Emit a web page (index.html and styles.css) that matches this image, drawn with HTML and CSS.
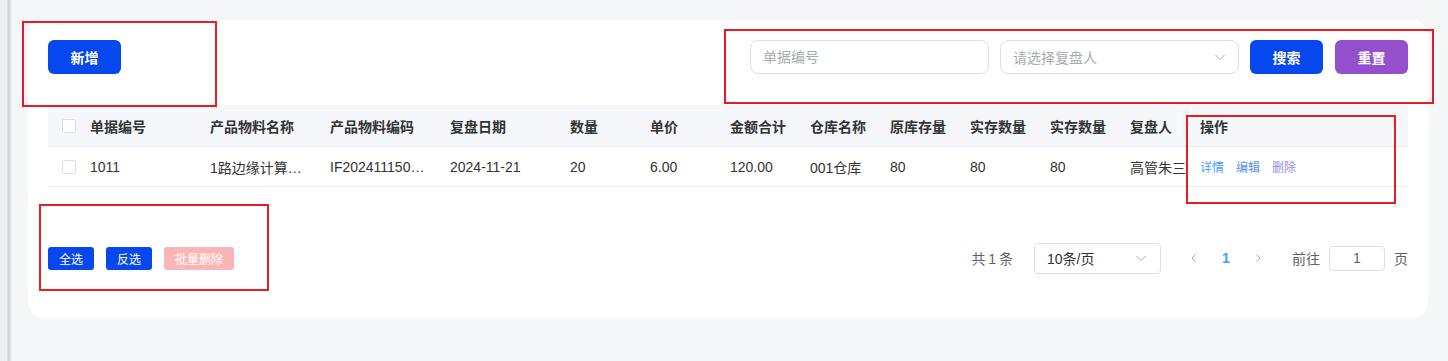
FILE: index.html
```html
<!DOCTYPE html>
<html>
<head>
    <meta charset="UTF-8">
    <title>复盘单管理</title>
    <link rel="stylesheet" href="styles.css">
</head>
<body>
    <div class="page">
        <div class="card">
            <div class="toolbar">
                <button class="btn btn-primary">新增</button>
                <div class="search">
                    <input class="field" type="text" placeholder="单据编号">
                    <div class="field select">
                        <span class="placeholder">请选择复盘人</span>
                        <svg class="chevron" width="12" height="12" viewBox="0 0 12 12" fill="none" stroke="currentColor" stroke-width="1">
                            <path d="M1.5 4l4.5 4.5L10.5 4"/>
                        </svg>
                    </div>
                    <button class="btn btn-primary">搜索</button>
                    <button class="btn btn-purple">重置</button>
                </div>
            </div>

            <div class="table">
                <div class="tr th">
                    <div class="cell check"><span class="checkbox"></span></div>
                    <div class="cell">单据编号</div>
                    <div class="cell">产品物料名称</div>
                    <div class="cell">产品物料编码</div>
                    <div class="cell">复盘日期</div>
                    <div class="cell">数量</div>
                    <div class="cell">单价</div>
                    <div class="cell">金额合计</div>
                    <div class="cell">仓库名称</div>
                    <div class="cell">原库存量</div>
                    <div class="cell">实存数量</div>
                    <div class="cell">实存数量</div>
                    <div class="cell">复盘人</div>
                    <div class="cell fixed">操作</div>
                </div>
                <div class="tr td">
                    <div class="cell check"><span class="checkbox"></span></div>
                    <div class="cell">1011</div>
                    <div class="cell">1路边缘计算…</div>
                    <div class="cell">IF202411150…</div>
                    <div class="cell">2024-11-21</div>
                    <div class="cell">20</div>
                    <div class="cell">6.00</div>
                    <div class="cell">120.00</div>
                    <div class="cell">001仓库</div>
                    <div class="cell">80</div>
                    <div class="cell">80</div>
                    <div class="cell">80</div>
                    <div class="cell">高管朱三</div>
                    <div class="cell fixed ops">
                        <a class="link detail">详情</a>
                        <a class="link edit">编辑</a>
                        <a class="link remove">删除</a>
                    </div>
                </div>
            </div>

            <div class="footer">
                <div class="batch">
                    <button class="btn-sm btn-primary">全选</button>
                    <button class="btn-sm btn-primary">反选</button>
                    <button class="btn-sm btn-disabled">批量删除</button>
                </div>
                <div class="pager">
                    <span class="total">共 1 条</span>
                    <div class="sizes">
                        <span>10条/页</span>
                        <svg class="chevron" width="12" height="12" viewBox="0 0 12 12" fill="none" stroke="currentColor" stroke-width="1">
                            <path d="M1.5 4l4.5 4.5L10.5 4"/>
                        </svg>
                    </div>
                    <div class="pages">
                        <span class="pg arrow">
                            <svg width="10" height="10" viewBox="0 0 10 10" fill="none" stroke="currentColor" stroke-width="1"><path d="M6.5 1.5L3 5l3.5 3.5"/></svg>
                        </span>
                        <span class="pg current">1</span>
                        <span class="pg arrow">
                            <svg width="10" height="10" viewBox="0 0 10 10" fill="none" stroke="currentColor" stroke-width="1"><path d="M3.5 1.5L7 5 3.5 8.5"/></svg>
                        </span>
                    </div>
                    <div class="jump">
                        <span>前往</span>
                        <input class="jump-input" type="text" value="1">
                        <span>页</span>
                    </div>
                </div>
            </div>
        </div>
    </div>

    <!-- 标注框 -->
    <div class="mark" style="left:22px;top:21px;width:195px;height:86px"></div>
    <div class="mark" style="left:724px;top:29px;width:710px;height:75px"></div>
    <div class="mark" style="left:1186px;top:115px;width:210px;height:89px"></div>
    <div class="mark" style="left:39px;top:204px;width:230px;height:87px"></div>
</body>
</html>
```

FILE: styles.css
```css
:root {
    --blue: #0647ee;
    --purple: #9450cc;
    --link: #409eff;
    --text: #303133;
    --muted: #606266;
    --border: #dcdfe6;
    --line: #ebeef5;
    --page: #f5f6f8;
}

* {
    box-sizing: border-box;
}

body {
    margin: 0;
    height: 361px;
    font-family: "Liberation Sans", "Noto Sans CJK SC", sans-serif;
    font-size: 14px;
    color: var(--text);
    background:
        linear-gradient(to right, #eceef1 0, #eceef1 7px, #c9cdd3 8px, #dde0e4 10px, var(--page) 12px);
    position: relative;
}

.page {
    padding: 20px 20px 0 28px;
}

.card {
    width: 1400px;
    height: 298px;
    background: white;
    border-radius: 16px;
    padding: 20px 20px 0 20px;
}

/* 顶部工具栏 */
.toolbar {
    display: flex;
    justify-content: space-between;
    align-items: center;
    height: 34px;
    margin-bottom: 31px;
}

.search {
    display: flex;
    align-items: center;
    gap: 11px;
}

.btn {
    width: 73px;
    height: 34px;
    border: none;
    border-radius: 6px;
    color: white;
    font-family: inherit;
    font-size: 14px;
    font-weight: bold;
    cursor: pointer;
}

.btn + .btn {
    margin-left: 1px;
}

.btn-primary {
    background: var(--blue);
    color: white;
}

.btn-purple {
    background: var(--purple);
}

.field {
    width: 239px;
    height: 34px;
    border: 1px solid var(--border);
    border-radius: 8px;
    padding: 0 12px;
    font-family: inherit;
    font-size: 14px;
    color: var(--text);
    outline: none;
}

.field::placeholder {
    color: #a8abb2;
}

.select {
    display: flex;
    align-items: center;
    justify-content: space-between;
}

.placeholder {
    color: #a8abb2;
}

.chevron {
    color: #a8abb2;
}

/* 表格 */
.table {
    width: 1360px;
}

.tr {
    display: grid;
    grid-template-columns: 30px repeat(4, 120px) repeat(7, 80px) 70px 220px;
    border-bottom: 1px solid var(--line);
}

.th {
    height: 42px;
    background: #f5f7fa;
    font-weight: bold;
    color: #333;
}

.td {
    height: 40px;
    color: #333;
}

.cell {
    display: flex;
    align-items: center;
    padding-left: 12px;
    white-space: nowrap;
    overflow: hidden;
}

.check {
    padding-left: 14px;
}

.checkbox {
    width: 14px;
    height: 14px;
    border: 1px solid var(--border);
    border-radius: 2px;
    background: white;
}

.fixed {
    box-shadow: -5px 0 6px -4px rgba(0, 0, 0, 0.08);
}

.th .fixed {
    background: #f5f7fa;
}

.td .fixed {
    background: white;
}

.ops {
    gap: 12px;
    font-size: 12px;
}

.link {
    cursor: pointer;
}

.detail {
    color: var(--link);
}

.edit {
    color: #5b8fe8;
}

.remove {
    color: #948ee6;
}

/* 底部 */
.footer {
    display: flex;
    justify-content: space-between;
    align-items: center;
    height: 32px;
    margin-top: 55px;
}

.batch {
    display: flex;
    gap: 12px;
    align-items: center;
}

.btn-sm {
    height: 23px;
    padding: 0 11px;
    border: none;
    border-radius: 3px;
    font-family: inherit;
    font-size: 12px;
    color: white;
}

.btn-disabled {
    background: #fab6b6;
    color: #fff;
}

.pager {
    display: flex;
    align-items: center;
    color: var(--muted);
    font-size: 14px;
}

.total {
    word-spacing: -1px;
    margin-right: 21px;
}

.sizes {
    width: 127px;
    height: 31px;
    border: 1px solid var(--border);
    border-radius: 4px;
    display: flex;
    align-items: center;
    justify-content: space-between;
    padding: 0 13px 0 12px;
    color: var(--text);
}

.pages {
    display: flex;
    margin-left: 17px;
}

.pg {
    width: 32px;
    height: 32px;
    display: flex;
    align-items: center;
    justify-content: center;
}

.arrow {
    color: #a8abb2;
}

.current {
    color: var(--link);
    font-weight: bold;
}

.jump {
    display: flex;
    align-items: center;
    gap: 9px;
    margin-left: 18px;
}

.jump-input {
    width: 56px;
    height: 25px;
    border: 1px solid var(--border);
    border-radius: 4px;
    text-align: center;
    font-family: inherit;
    font-size: 14px;
    color: var(--muted);
    outline: none;
}

/* 红色标注框 */
.mark {
    position: absolute;
    border: 2px solid #e81c24;
    pointer-events: none;
}
```
